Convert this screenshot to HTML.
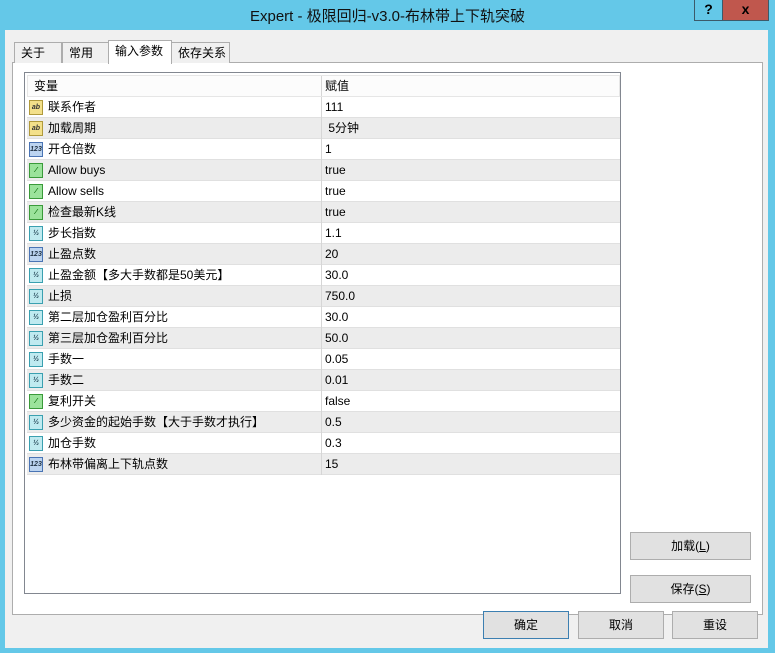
<!DOCTYPE html>
<html><head><meta charset="utf-8"><style>
*{margin:0;padding:0;box-sizing:border-box}
body{width:775px;height:653px;background:#64c8e8;position:relative;overflow:hidden;font-family:"Liberation Sans","Noto Sans CJK SC",sans-serif;font-size:12px;color:#000}
.title{position:absolute;left:0;top:5px;width:775px;text-align:center;font-size:15px;color:#111}
.hb{position:absolute;top:0;height:21px;border:1px solid #3c5a6a;border-top:none;font-weight:bold;font-size:14px;text-align:center;line-height:19px}
.dlg{position:absolute;left:5px;top:30px;width:763px;height:618px;background:#f0f0f0}
.tab{position:absolute;top:42px;height:21px;border:1px solid #adadad;border-bottom:none;background:#f0f0f0;padding:1px 0 0 6px;font-size:12px}
.panel{position:absolute;left:12px;top:62px;width:751px;height:553px;background:#fff;border:1px solid #adadad}
.list{position:absolute;left:24px;top:72px;width:597px;height:522px;border:1px solid #828790;background:#fff}
.row{position:absolute;left:2px;width:593px;height:21px;border-bottom:1px solid #e0e0e0;line-height:20px}
.row.g{background:#ececec}
.n{position:absolute;left:21px}
.v{position:absolute;left:294px;top:0;height:21px;border-left:1px solid #d6d6d6;padding-left:3px}
.ic{position:absolute;left:2px;top:3px;width:14px;height:15px;border:1px solid;font-size:7px;line-height:13px;text-align:center;font-weight:bold}
.ab{background:#f3e08a;border-color:#b09a3c;color:#333}
.n3{background:#bcd4f0;border-color:#4a74b4;color:#234}
.bo{background:#9be39b;border-color:#3a9a3a;color:#060}
.hf{background:#bfeaf0;border-color:#3aa0b0;color:#245}
.btn{position:absolute;height:28px;border:1px solid #adadad;background:#e1e1e1;text-align:center;line-height:26px;font-size:12px}
</style></head><body>
<div class="title">Expert - 极限回归-v3.0-布林带上下轨突破</div>
<div class="hb" style="left:694px;width:29px;background:#64c8e8">?</div>
<div class="hb" style="left:722px;width:47px;background:#c0574d">x</div>
<div class="dlg"></div>
<div class="panel"></div>
<div class="tab" style="left:14px;width:48px">关于</div>
<div class="tab" style="left:62px;width:47px">常用</div>
<div class="tab" style="left:108px;top:40px;height:24px;width:64px;background:#fff;border-color:#adadad">输入参数</div>
<div class="tab" style="left:171px;width:59px">依存关系</div>
<div class="list">
<div class="row" style="top:2px;height:22px;border:1px solid #e6e6e6;background:#fcfcfc"><span class="n" style="left:6px">变量</span><span class="v" style="left:293px;height:20px">赋值</span></div>
<div class="row" style="top:24px"><i class="ic ab">ab</i><span class="n">联系作者</span><span class="v">111</span></div>
<div class="row g" style="top:45px"><i class="ic ab">ab</i><span class="n">加载周期</span><span class="v">&nbsp;5分钟</span></div>
<div class="row" style="top:66px"><i class="ic n3">123</i><span class="n">开仓倍数</span><span class="v">1</span></div>
<div class="row g" style="top:87px"><i class="ic bo">⁄</i><span class="n">Allow buys</span><span class="v">true</span></div>
<div class="row" style="top:108px"><i class="ic bo">⁄</i><span class="n">Allow sells</span><span class="v">true</span></div>
<div class="row g" style="top:129px"><i class="ic bo">⁄</i><span class="n">检查最新K线</span><span class="v">true</span></div>
<div class="row" style="top:150px"><i class="ic hf">½</i><span class="n">步长指数</span><span class="v">1.1</span></div>
<div class="row g" style="top:171px"><i class="ic n3">123</i><span class="n">止盈点数</span><span class="v">20</span></div>
<div class="row" style="top:192px"><i class="ic hf">½</i><span class="n">止盈金额【多大手数都是50美元】</span><span class="v">30.0</span></div>
<div class="row g" style="top:213px"><i class="ic hf">½</i><span class="n">止损</span><span class="v">750.0</span></div>
<div class="row" style="top:234px"><i class="ic hf">½</i><span class="n">第二层加仓盈利百分比</span><span class="v">30.0</span></div>
<div class="row g" style="top:255px"><i class="ic hf">½</i><span class="n">第三层加仓盈利百分比</span><span class="v">50.0</span></div>
<div class="row" style="top:276px"><i class="ic hf">½</i><span class="n">手数一</span><span class="v">0.05</span></div>
<div class="row g" style="top:297px"><i class="ic hf">½</i><span class="n">手数二</span><span class="v">0.01</span></div>
<div class="row" style="top:318px"><i class="ic bo">⁄</i><span class="n">复利开关</span><span class="v">false</span></div>
<div class="row g" style="top:339px"><i class="ic hf">½</i><span class="n">多少资金的起始手数【大于手数才执行】</span><span class="v">0.5</span></div>
<div class="row" style="top:360px"><i class="ic hf">½</i><span class="n">加仓手数</span><span class="v">0.3</span></div>
<div class="row g" style="top:381px"><i class="ic n3">123</i><span class="n">布林带偏离上下轨点数</span><span class="v">15</span></div>
</div>
<div class="btn" style="left:630px;top:532px;width:121px">加载(<u>L</u>)</div>
<div class="btn" style="left:630px;top:575px;width:121px">保存(<u>S</u>)</div>
<div class="btn" style="left:483px;top:611px;width:86px;border-color:#3c7fb1">确定</div>
<div class="btn" style="left:578px;top:611px;width:86px">取消</div>
<div class="btn" style="left:672px;top:611px;width:86px">重设</div>
</body></html>
